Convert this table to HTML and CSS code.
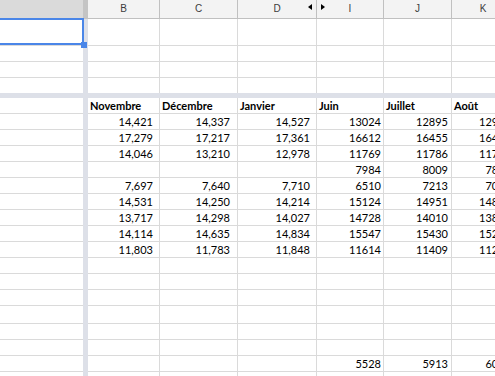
FILE: index.html
```html
<!DOCTYPE html>
<html lang="fr">
<head>
    <meta charset="UTF-8">
    <title>Feuille - ventes mensuelles</title>
    <link rel="stylesheet" href="styles.css">
</head>
<body>

    <div class="sheet">

        <!-- En-tetes de colonnes (E a H masquees) -->
        <div class="row head">
            <div class="corner"></div>
            <div class="corner-bar"></div>
            <div class="col">B</div>
            <div class="col">C</div>
            <div class="col">D<span class="hide-left"></span></div>
            <div class="col"><span class="hide-right"></span>I</div>
            <div class="col">J</div>
            <div class="col">K</div>
        </div>

        <!-- Lignes figees -->
        <div class="row tall">
            <div class="cell first">
                <div class="selection"></div>
                <div class="handle"></div>
            </div>
            <div class="bar"></div>
            <div class="cell"></div><div class="cell"></div><div class="cell"></div>
            <div class="cell"></div><div class="cell"></div><div class="cell"></div>
        </div>
        <div class="row">
            <div class="cell first"></div><div class="bar"></div>
            <div class="cell"></div><div class="cell"></div><div class="cell"></div>
            <div class="cell"></div><div class="cell"></div><div class="cell"></div>
        </div>
        <div class="row">
            <div class="cell first"></div><div class="bar"></div>
            <div class="cell"></div><div class="cell"></div><div class="cell"></div>
            <div class="cell"></div><div class="cell"></div><div class="cell"></div>
        </div>
        <div class="row short">
            <div class="cell first nb"></div><div class="bar"></div>
            <div class="cell nb"></div><div class="cell nb"></div><div class="cell nb"></div>
            <div class="cell nb"></div><div class="cell nb"></div><div class="cell nb"></div>
        </div>

        <div class="freeze"></div>

        <!-- Donnees -->
        <div class="row months">
            <div class="cell first"></div><div class="bar"></div>
            <div class="cell">Novembre</div>
            <div class="cell">Décembre</div>
            <div class="cell">Janvier</div>
            <div class="cell">Juin</div>
            <div class="cell">Juillet</div>
            <div class="cell">Août</div>
        </div>
        <div class="row num">
            <div class="cell first"></div><div class="bar"></div>
            <div class="cell">14,421</div><div class="cell">14,337</div><div class="cell">14,527</div>
            <div class="cell">13024</div><div class="cell">12895</div><div class="cell">12958</div>
        </div>
        <div class="row num">
            <div class="cell first"></div><div class="bar"></div>
            <div class="cell">17,279</div><div class="cell">17,217</div><div class="cell">17,361</div>
            <div class="cell">16612</div><div class="cell">16455</div><div class="cell">16420</div>
        </div>
        <div class="row num">
            <div class="cell first"></div><div class="bar"></div>
            <div class="cell">14,046</div><div class="cell">13,210</div><div class="cell">12,978</div>
            <div class="cell">11769</div><div class="cell">11786</div><div class="cell">11712</div>
        </div>
        <div class="row num">
            <div class="cell first"></div><div class="bar"></div>
            <div class="cell"></div><div class="cell"></div><div class="cell"></div>
            <div class="cell">7984</div><div class="cell">8009</div><div class="cell">7841</div>
        </div>
        <div class="row num">
            <div class="cell first"></div><div class="bar"></div>
            <div class="cell">7,697</div><div class="cell">7,640</div><div class="cell">7,710</div>
            <div class="cell">6510</div><div class="cell">7213</div><div class="cell">7036</div>
        </div>
        <div class="row num">
            <div class="cell first"></div><div class="bar"></div>
            <div class="cell">14,531</div><div class="cell">14,250</div><div class="cell">14,214</div>
            <div class="cell">15124</div><div class="cell">14951</div><div class="cell">14829</div>
        </div>
        <div class="row num">
            <div class="cell first"></div><div class="bar"></div>
            <div class="cell">13,717</div><div class="cell">14,298</div><div class="cell">14,027</div>
            <div class="cell">14728</div><div class="cell">14010</div><div class="cell">13870</div>
        </div>
        <div class="row num">
            <div class="cell first"></div><div class="bar"></div>
            <div class="cell">14,114</div><div class="cell">14,635</div><div class="cell">14,834</div>
            <div class="cell">15547</div><div class="cell">15430</div><div class="cell">15263</div>
        </div>
        <div class="row num">
            <div class="cell first"></div><div class="bar"></div>
            <div class="cell">11,803</div><div class="cell">11,783</div><div class="cell">11,848</div>
            <div class="cell">11614</div><div class="cell">11409</div><div class="cell">11245</div>
        </div>

        <!-- Lignes vides -->
        <div class="row">
            <div class="cell first"></div><div class="bar"></div>
            <div class="cell"></div><div class="cell"></div><div class="cell"></div>
            <div class="cell"></div><div class="cell"></div><div class="cell"></div>
        </div>
        <div class="row">
            <div class="cell first"></div><div class="bar"></div>
            <div class="cell"></div><div class="cell"></div><div class="cell"></div>
            <div class="cell"></div><div class="cell"></div><div class="cell"></div>
        </div>
        <div class="row">
            <div class="cell first"></div><div class="bar"></div>
            <div class="cell"></div><div class="cell"></div><div class="cell"></div>
            <div class="cell"></div><div class="cell"></div><div class="cell"></div>
        </div>
        <div class="row mid">
            <div class="cell first"></div><div class="bar"></div>
            <div class="cell"></div><div class="cell"></div><div class="cell"></div>
            <div class="cell"></div><div class="cell"></div><div class="cell"></div>
        </div>
        <div class="row">
            <div class="cell first"></div><div class="bar"></div>
            <div class="cell"></div><div class="cell"></div><div class="cell"></div>
            <div class="cell"></div><div class="cell"></div><div class="cell"></div>
        </div>
        <div class="row">
            <div class="cell first"></div><div class="bar"></div>
            <div class="cell"></div><div class="cell"></div><div class="cell"></div>
            <div class="cell"></div><div class="cell"></div><div class="cell"></div>
        </div>
        <div class="row num">
            <div class="cell first"></div><div class="bar"></div>
            <div class="cell"></div><div class="cell"></div><div class="cell"></div>
            <div class="cell">5528</div><div class="cell">5913</div><div class="cell">6047</div>
        </div>
        <div class="row">
            <div class="cell first"></div><div class="bar"></div>
            <div class="cell"></div><div class="cell"></div><div class="cell"></div>
            <div class="cell"></div><div class="cell"></div><div class="cell"></div>
        </div>

    </div>

</body>
</html>
```

FILE: styles.css
```css
/* Page */
html, body { margin: 0; padding: 0; }
body { background: #ffffff; overflow: hidden; font-family: Lato, 'Open Sans', sans-serif; }

.sheet { width: 514px; }

/* Lignes : A | barre | B C D I J K */
.row
{
    display: grid;
    grid-template-columns: 83px 5px 72px 78px 79px 67px 68px 63px;
    height: 16px;
}
.row.tall { height: 27px; }
.row.short { height: 15px; }
.row.mid { height: 18px; }

/* En-tetes de colonnes */
.head { height: 19px; }
.corner { background: #dadada; }
.corner-bar { background: #c4c4c4; }
.col
{
    position: relative;
    box-sizing: border-box;
    background: #f3f3f3;
    border-bottom: 1px solid #c0c0c0;
    border-right: 1px solid #c0c0c0;
    font-family: 'Liberation Sans', Arial, sans-serif;
    font-size: 10px;
    line-height: 18px;
    color: #3c3c3c;
    text-align: center;
}

/* Fleches des colonnes masquees */
.hide-left, .hide-right
{
    position: absolute;
    top: 4px;
    width: 0;
    height: 0;
    border-top: 3.5px solid transparent;
    border-bottom: 3.5px solid transparent;
}
.hide-left { right: 4px; border-right: 4px solid #000000; }
.hide-right { left: 4px; border-left: 4px solid #000000; }

/* Cellules */
.cell
{
    box-sizing: border-box;
    border-bottom: 1px solid #dadada;
    border-right: 1px solid #dadada;
    padding: 0 2px;
    font-size: 11px;
    line-height: 15px;
    color: #000000;
    white-space: nowrap;
    overflow: hidden;
}
.cell.first { border-right: none; }
.cell.nb { border-bottom: none; }

.months .cell { font-weight: 700; }

.num .cell { text-align: right; }
.num .cell:nth-child(3) { padding-right: 6px; }
.num .cell:nth-child(4) { padding-right: 7px; }
.num .cell:nth-child(5) { padding-right: 6px; }
.num .cell:nth-child(6) { padding-right: 2px; }
.num .cell:nth-child(7) { padding-right: 3px; }
.num .cell:nth-child(8) { padding-right: 3px; }

/* Barres de gel */
.bar { background: #dde0e8; }
.freeze { height: 5px; background: #dde0e8; }

/* Selection de A1 */
.cell.first { position: relative; overflow: visible; }
.selection
{
    position: absolute;
    top: -1px;
    left: -3px;
    right: -1px;
    bottom: 0;
    border: 2px solid #4a86e8;
}
.handle
{
    position: absolute;
    left: 81px;
    top: 23px;
    width: 6px;
    height: 6px;
    background: #4a86e8;
    z-index: 2;
}
```
